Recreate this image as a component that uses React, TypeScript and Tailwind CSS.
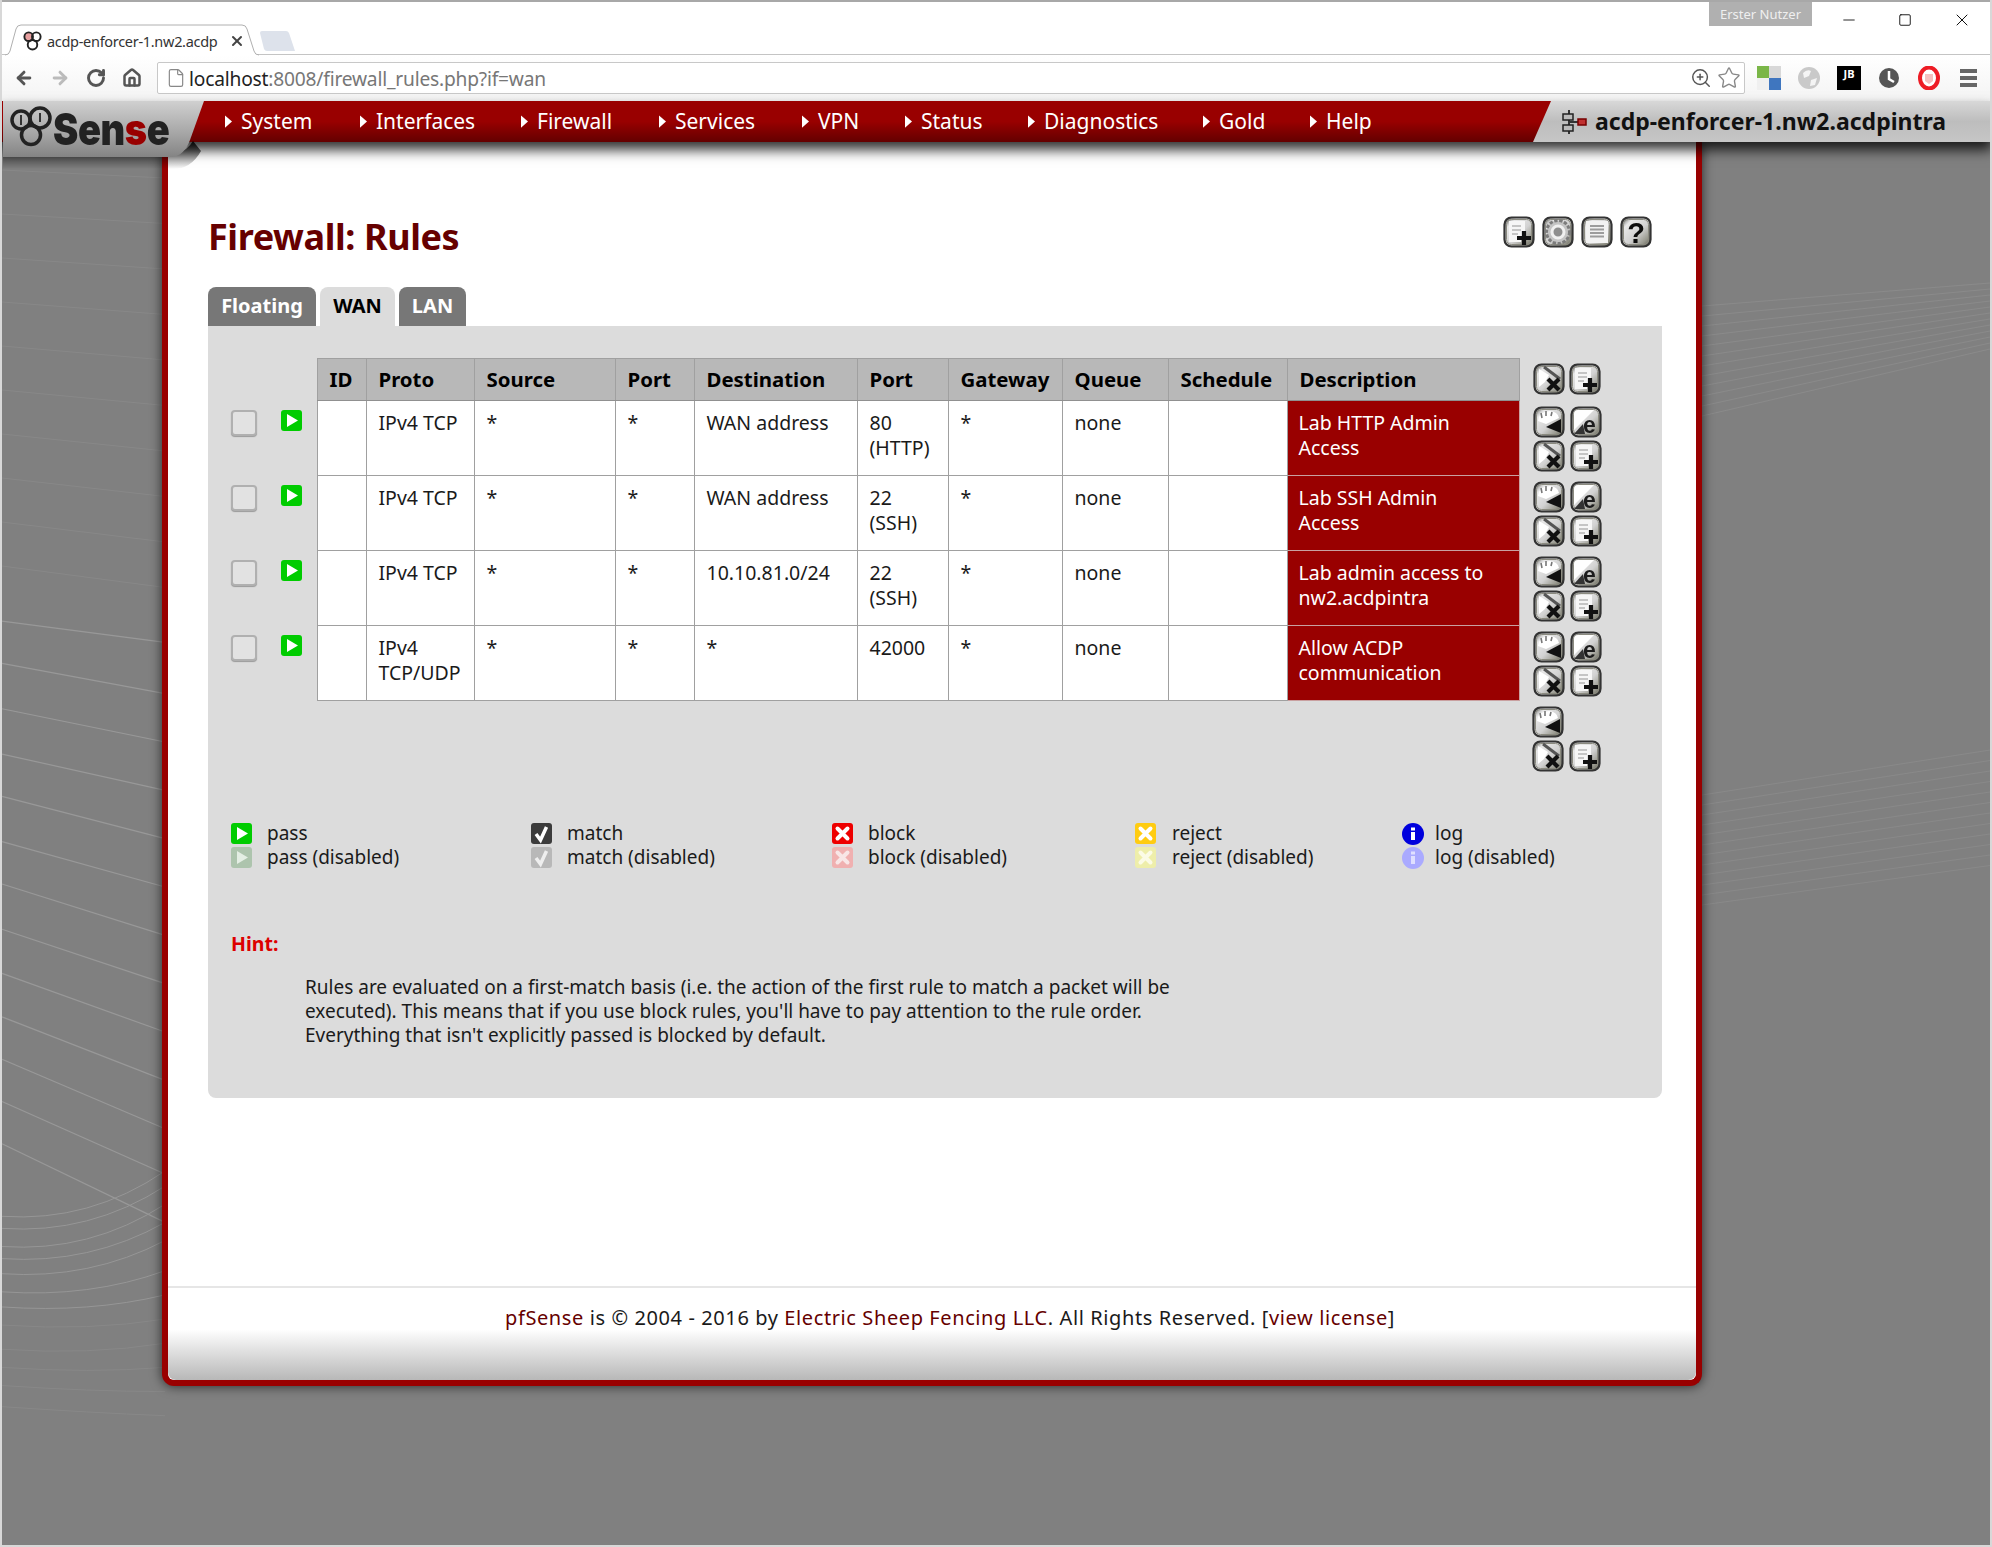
import { useId } from "react";
import { ArrowLeft, ArrowRight, RotateCw, House, File, ZoomIn, Star, Minus, Square, X } from "lucide-react";

type Glyph = "del" | "add" | "move" | "edit" | "gear" | "list" | "help";

const ToolIcon = ({ glyph, className = "w-[32px] h-[32px]" }: { glyph: Glyph; className?: string }) => {
    const id = useId();
    return (
        <svg viewBox="0 0 32 32" className={`blur-[0.5px] ${className}`}>
            <defs>
                <linearGradient id={id} x1="0" y1="0" x2="1" y2="1">
                    <stop offset="0" stopColor="#4c4c4c" />
                    <stop offset="0.22" stopColor="#e8e8e8" />
                    <stop offset="0.55" stopColor="#d2d2d2" />
                    <stop offset="0.8" stopColor="#9a9a90" />
                    <stop offset="1" stopColor="#55554a" />
                </linearGradient>
            </defs>
            <rect x="1.5" y="1.5" width="29" height="29" rx="7" fill={`url(#${id})`} stroke="#333" strokeWidth="2.2" />
            <rect x="3.5" y="3.5" width="25" height="25" rx="5" fill="none" stroke="#8b8b80" strokeWidth="1" />
            {glyph === "del" && (
                <g>
                    <path d="M6 6 L16 12 L12 19 L6 24 Z" fill="#fff" />
                    <path d="M11 4 L27 16" stroke="#555" strokeWidth="3" />
                    <path d="M15 16 L26 27 M26 16 L15 27" stroke="#111" strokeWidth="4.2" />
                </g>
            )}
            {glyph === "add" && (
                <g>
                    <path d="M6 5 H22 V20 H18 V26 H6 Z" fill="#f6f6f6" />
                    <path d="M9 10 H18 M9 14 H18 M9 18 H15" stroke="#b5b5b5" strokeWidth="1.5" />
                    <path d="M21 15 V29 M14 22 H28" stroke="#111" strokeWidth="4.2" />
                </g>
            )}
            {glyph === "move" && (
                <g>
                    <path d="M5 15 Q6 5 17 5 Q25 6 26 12 L13 18 Z" fill="#fff" />
                    <path d="M9 12 L8 7 M13 10 L13 5 M18 10 L19 6" stroke="#777" strokeWidth="1.6" />
                    <path d="M28 13 V27 L13 21 Z" fill="#111" />
                </g>
            )}
            {glyph === "edit" && (
                <g>
                    <path d="M4 24 L24 4 L8 4 Q4 4 4 8 Z" fill="#fff" />
                    <path d="M4 28 L13 18 L15 28 Z" fill="#333" />
                    <text x="13" y="27" fontSize="23" fontWeight="700" fill="#1c1c1c" fontFamily="'Liberation Sans',sans-serif">e</text>
                </g>
            )}
            {glyph === "gear" && (
                <g>
                    <circle cx="16" cy="16" r="11.5" fill="#c4c4c4" stroke="#7c7c7c" strokeWidth="3" strokeDasharray="3.4 1.6" />
                    <circle cx="16" cy="16" r="6" fill="#8e8e8e" stroke="#f0f0f0" strokeWidth="3" />
                </g>
            )}
            {glyph === "list" && (
                <g>
                    <rect x="5" y="5" width="22" height="22" fill="#f2f2f2" />
                    <path d="M9 10 H23 M9 13.5 H23 M9 17 H23 M9 20.5 H23" stroke="#9c9c9c" strokeWidth="2.2" />
                </g>
            )}
            {glyph === "help" && (
                <text x="16" y="27" textAnchor="middle" fontSize="29" fontWeight="700" fill="#0c0c0c" fontFamily="'Liberation Sans',sans-serif">?</text>
            )}
        </svg>
    );
};

const Pass = ({ faded = false }: { faded?: boolean }) => (
    <span className={`w-[21px] h-[21px] rounded-[3px] flex items-center justify-center shrink-0 ${faded ? "bg-[#adc4ad]" : "bg-[#00cc00]"}`}>
        <svg viewBox="0 0 21 21" className="w-[21px] h-[21px]"><path d="M6 4 L17 10.5 L6 17 Z" fill={faded ? "#e4eee4" : "#fff"} /></svg>
    </span>
);

const Match = ({ faded = false }: { faded?: boolean }) => (
    <span className={`w-[21px] h-[21px] rounded-[3px] flex items-center justify-center shrink-0 ${faded ? "bg-[#b8b8b8]" : "bg-[#3c3c3c]"}`}>
        <svg viewBox="0 0 21 21" className="w-[21px] h-[21px]"><path d="M5 11 L9.5 17 L15.5 4" fill="none" stroke={faded ? "#eee" : "#fff"} strokeWidth="3.5" /></svg>
    </span>
);

const Cross = ({ color, mark }: { color: string; mark: string }) => (
    <span className={`w-[21px] h-[21px] rounded-[3px] flex items-center justify-center shrink-0 ${color}`}>
        <svg viewBox="0 0 21 21" className="w-[21px] h-[21px]"><path d="M5.5 5.5 L15.5 15.5 M15.5 5.5 L5.5 15.5" stroke={mark} strokeWidth="4" strokeLinecap="round" /></svg>
    </span>
);

const Info = ({ faded = false }: { faded?: boolean }) => (
    <span className={`w-[22px] h-[22px] rounded-full flex items-center justify-center shrink-0 ${faded ? "bg-[#aaaaff]" : "bg-[#0000dd]"}`}>
        <svg viewBox="0 0 22 22" className="w-[22px] h-[22px]"><path d="M9 9 H13 V17 H9 Z M9 4.5 H13 V7.5 H9 Z" fill={faded ? "#dfdfff" : "#fff"} /></svg>
    </span>
);

const navItems = [
    { label: "System", w: "w-[135px]" },
    { label: "Interfaces", w: "w-[161px]" },
    { label: "Firewall", w: "w-[138px]" },
    { label: "Services", w: "w-[143px]" },
    { label: "VPN", w: "w-[103px]" },
    { label: "Status", w: "w-[123px]" },
    { label: "Diagnostics", w: "w-[175px]" },
    { label: "Gold", w: "w-[107px]" },
    { label: "Help", w: "w-[100px]" },
];

const rules = [
    { proto: "IPv4 TCP", dest: "WAN address", port: "80 (HTTP)", desc: "Lab HTTP Admin Access" },
    { proto: "IPv4 TCP", dest: "WAN address", port: "22 (SSH)", desc: "Lab SSH Admin Access" },
    { proto: "IPv4 TCP", dest: "10.10.81.0/24", port: "22 (SSH)", desc: "Lab admin access to nw2.acdpintra" },
    { proto: "IPv4 TCP/UDP", dest: "*", port: "42000", desc: "Allow ACDP communication" },
];

const headers = ["ID", "Proto", "Source", "Port", "Destination", "Port", "Gateway", "Queue", "Schedule", "Description"];

const legend = [
    { w: "w-[300px]", gap: "gap-[15px]", label: "pass", on: <Pass />, off: <Pass faded /> },
    { w: "w-[301px]", gap: "gap-[15px]", label: "match", on: <Match />, off: <Match faded /> },
    { w: "w-[303px]", gap: "gap-[15px]", label: "block", on: <Cross color="bg-[#ee0000]" mark="#fff" />, off: <Cross color="bg-[#f0b0b0]" mark="#f8e6e6" /> },
    { w: "w-[267px]", gap: "gap-[16px]", label: "reject", on: <Cross color="bg-[#ffcc11]" mark="#fff" />, off: <Cross color="bg-[#eeeeaa]" mark="#fbfbe6" /> },
    { w: "w-[220px]", gap: "gap-[11px]", label: "log", on: <Info />, off: <Info faded /> },
];

const leftStart = [35, 105, 180, 255, 325, 400, 470, 545, 618, 690, 760, 830, 900];
const leftEnd = [70, 155, 235, 315, 395, 475, 555, 635, 715, 795, 875, 950, 1030];
const fanStart = [1020, 1040, 1070, 1090, 1115, 1145, 1170, 1200, 1240, 1270, 1300, 1335];
const fanEnd = [945, 970, 1000, 1030, 1060, 1110, 1150, 1190, 1230, 1270, 1310, 1350];
const band = [0, 1, 2, 3, 4, 5, 6, 7, 8, 9, 10, 11];

const Backdrop = () => (
    <svg className="absolute inset-0 w-full h-full" viewBox="0 0 1992 1547">
        {leftStart.map((y, i) => (
            <path key={i} d={`M2 ${600 + y / 1.655} L165 ${600 + leftEnd[i] / 1.655}`} stroke="#989898" strokeWidth="1.2" fill="none" />
        ))}
        {band.slice(0, 10).map(i => (
            <path key={i} d={`M2 ${170 + i * 44} L165 ${178 + i * 44 + i * 1.5}`} stroke="#888888" strokeWidth="1" fill="none" />
        ))}
        {fanStart.map((y, i) => (
            <path key={i} d={`M2 ${600 + y / 1.655} Q90 ${600 + (y + 10) / 1.655} 165 ${600 + fanEnd[i] / 1.655}`} stroke={i < 7 ? "#969696" : "#888888"} strokeWidth="1" fill="none" />
        ))}
        {band.map(i => (
            <path key={i} d={`M1702 ${306 + i * 10} L1990 ${283 + i * 6}`} stroke="#8a8a8a" strokeWidth="1" fill="none" />
        ))}
        {band.map(i => (
            <path key={i} d={`M1702 ${795 + i * 10} L1990 ${750 + i * 10.5}`} stroke="#898989" strokeWidth="1" fill="none" />
        ))}
    </svg>
);

const Logo = () => (
    <div className="absolute left-[3px] top-0 w-[215px] h-[68px]">
        <svg viewBox="0 0 215 68" className="absolute inset-0 w-full h-full">
            <defs>
                <linearGradient id="logoBg" x1="0" y1="0" x2="0" y2="1">
                    <stop offset="0" stopColor="#d0d0d0" />
                    <stop offset="0.55" stopColor="#a8a8a8" />
                    <stop offset="1" stopColor="#848484" />
                </linearGradient>
                <linearGradient id="logoShade" x1="0" y1="0" x2="0" y2="1">
                    <stop offset="0" stopColor="#000" stopOpacity="0.9" />
                    <stop offset="1" stopColor="#000" stopOpacity="0" />
                </linearGradient>
            </defs>
            <path d="M0 50 H176 Q184 50 190 40 L198 50 Q188 68 170 68 H0 Z" fill="url(#logoShade)" />
            <path d="M0 0 H201 L187 39 Q181 55 169 56 H0 Z" fill="url(#logoBg)" />
            <g fill="none" stroke="#222" strokeWidth="3.5" className="blur-[0.5px]">
                <circle cx="18" cy="19" r="9" />
                <circle cx="37" cy="17" r="10" />
                <circle cx="28" cy="34" r="9.5" />
            </g>
            <path d="M18 14 V24 M37 12 V21" stroke="#333" strokeWidth="2" />
        </svg>
        <span className="absolute left-[50px] top-[2px] text-[38px] leading-[52px] font-black tracking-[-0.4px] text-[#222] font-['Inter',sans-serif] scale-y-[1.15] blur-[0.5px]">
            Sen<span className="text-[#990000]">s</span>e
        </span>
    </div>
);

export default function App() {
    return (
        <div className="relative w-[1992px] h-[1547px] overflow-hidden bg-[#808080] text-[#1a1a1a] text-[19.5px] leading-[25px] font-['Noto_Sans',sans-serif]">
            <Backdrop />

            {/* browser chrome */}
            <div className="relative bg-white border-t-2 border-[#a8a8a8]">
                <div className="relative h-[53px] border-b border-[#c4c4c4]">
                    <svg className="absolute left-[4px] top-[22px] w-[300px] h-[32px]" viewBox="0 0 300 32">
                        <path d="M256 9 Q256 7 258 7 H282 Q284 7 285 9 L291 27 H263 Q261 27 260 25 Z" fill="#dde2eb" />
                        <path d="M1 31 Q5 31 6 27 L12 5 Q13 1 17 1 H238 Q242 1 243 5 L250 27 Q251 31 255 31" fill="#fff" stroke="#b0b0b0" />
                    </svg>
                    <div className="absolute left-[22px] top-[28px] flex items-center gap-[4px]">
                        <svg viewBox="0 0 22 22" className="w-[21px] h-[21px]">
                            <g fill="none" stroke="#222" strokeWidth="2">
                                <circle cx="7" cy="7" r="4.5" fill="#e8a0a0" />
                                <circle cx="15" cy="7" r="4.5" />
                                <circle cx="11" cy="15.5" r="5" />
                            </g>
                        </svg>
                        <span className="whitespace-nowrap text-[14.5px] leading-[20px] text-[#333] tracking-[-0.3px]">acdp-enforcer-1.nw2.acdp</span>
                        <X className="w-[16px] h-[16px] ml-[8px] text-[#444]" strokeWidth={3} />
                    </div>
                    <div className="absolute right-[180px] top-[0px] w-[103px] h-[24px] bg-[#b0b0b0] text-[#efefef] text-[13px] leading-[24px] text-center">Erster Nutzer</div>
                    <div className="absolute right-0 top-[8px] flex items-center">
                        <Minus className="w-[18px] h-[18px] mr-[40px] text-[#111]" strokeWidth={1.2} />
                        <Square className="w-[14px] h-[14px] mr-[40px] text-[#111]" strokeWidth={1.6} />
                        <X className="w-[20px] h-[20px] mr-[20px] text-[#111]" strokeWidth={1.2} />
                    </div>
                </div>
                <div className="h-[46px] flex items-center bg-gradient-to-b from-white to-[#f4f4f4]">
                    <div className="flex items-center w-[157px] pl-[14px] gap-[16px]">
                        <ArrowLeft className="w-[20px] h-[20px] text-[#555]" strokeWidth={3.5} />
                        <ArrowRight className="w-[20px] h-[20px] text-[#bbb]" strokeWidth={3.5} />
                        <RotateCw className="w-[20px] h-[20px] text-[#555]" strokeWidth={3.5} />
                        <House className="w-[20px] h-[20px] text-[#555]" strokeWidth={3} />
                    </div>
                    <div className="flex-none w-[1588px] h-[32px] bg-white border border-[#c8c8c8] rounded-[2px] flex items-center pl-[8px] pr-[3px]">
                        <File className="w-[20px] h-[20px] text-[#888]" strokeWidth={1.4} />
                        <span className="ml-[3px] text-[19.2px] text-[#777] whitespace-nowrap tracking-[-0.2px]"><span className="text-[#222]">localhost</span>:8008/firewall_rules.php?if=wan</span>
                        <ZoomIn className="ml-auto w-[22px] h-[22px] text-[#555]" strokeWidth={1.6} />
                        <Star className="ml-[5px] w-[24px] h-[24px] text-[#888]" strokeWidth={1.4} />
                    </div>
                    <div className="flex items-center pl-[12px] gap-[16px]">
                        <div className="grid grid-cols-2 w-[24px] h-[24px]">
                            <span className="bg-[#7ab648]" /><span className="bg-[#d8d8d8]" /><span className="bg-[#f0f0f0]" /><span className="bg-[#3f76bf]" />
                        </div>
                        <svg viewBox="0 0 24 24" className="w-[24px] h-[24px]">
                            <circle cx="12" cy="12" r="11" fill="#c9c9c9" />
                            <path d="M6 7 Q10 3 14 5 L12 10 L7 12 Z M14 14 L20 12 L18 19 L13 20 Z" fill="#f4f4f4" />
                        </svg>
                        <span className="w-[24px] h-[24px] bg-black text-white text-[11px] leading-[16px] font-bold text-center">JB</span>
                        <svg viewBox="0 0 24 24" className="w-[24px] h-[24px]">
                            <circle cx="12" cy="12" r="10" fill="#555" />
                            <path d="M12 5 V13 L17 16" stroke="#fff" strokeWidth="2.5" fill="none" />
                        </svg>
                        <svg viewBox="0 0 24 24" className="w-[24px] h-[24px]">
                            <ellipse cx="12" cy="12" rx="9" ry="10.5" fill="#fff" stroke="#ee1c25" strokeWidth="4" />
                            <path d="M8 8 H16 V15 L12 18 L8 15 Z" fill="#f5c0c0" />
                        </svg>
                        <div className="flex flex-col gap-[3px] w-[17px] ml-[3px]">
                            <span className="h-[4px] bg-[#666]" /><span className="h-[4px] bg-[#666]" /><span className="h-[4px] bg-[#666]" />
                        </div>
                    </div>
                </div>
            </div>

            {/* pfSense header bar */}
            <div className="relative z-20 h-[41px] flex bg-gradient-to-b from-[#990000] via-[#990000] to-[#640000] shadow-[0_8px_12px_rgba(0,0,0,0.8)]">
                <div className="flex pl-[225px] w-[1533px] items-center text-white text-[21px]">
                    {navItems.map(item => (
                        <div key={item.label} className={`flex items-center shrink-0 ${item.w}`}>
                            <svg viewBox="0 0 8 14" className="w-[7px] h-[13px] mr-[9px]"><path d="M0 0 L8 7 L0 14 Z" fill="#fff" /></svg>
                            <span>{item.label}</span>
                        </div>
                    ))}
                </div>
                <div className="flex-1 flex items-center pl-[27px] bg-gradient-to-b from-[#d8d8d8] via-[#bdbdbd] to-[#c6c6c6] [clip-path:polygon(18px_0,100%_0,100%_100%,0_100%)]">
                    <svg viewBox="0 0 28 28" className="w-[28px] h-[28px]">
                        <path d="M9 2 V26 M9 14 H22" stroke="#333" strokeWidth="2" />
                        <rect x="3" y="6" width="10" height="6" fill="#bbb" stroke="#222" strokeWidth="1.5" />
                        <rect x="3" y="17" width="10" height="6" fill="#bbb" stroke="#222" strokeWidth="1.5" />
                        <rect x="18" y="11" width="8" height="6" fill="#c03030" stroke="#700" strokeWidth="1.5" />
                    </svg>
                    <span className="ml-[7px] text-[23px] font-bold text-[#111] whitespace-nowrap">acdp-enforcer-1.nw2.acdpintra</span>
                </div>
                <Logo />
            </div>

            {/* main card */}
            <div className="relative z-10 ml-[162px] w-[1540px] h-[1244px] flex flex-col bg-white border-x-[6px] border-b-[6px] border-[#990000] rounded-b-[12px] shadow-[0_0_12px_rgba(0,0,0,0.7)]">
                <div className="flex justify-between pl-[40px] pr-[44px] pt-[75px]">
                    <h1 className="text-[36px] leading-[40px] font-bold text-[#660000] tracking-[-0.4px]">Firewall: Rules</h1>
                    <div className="flex gap-[7px] items-center -mt-[11px]">
                        <ToolIcon glyph="add" />
                        <ToolIcon glyph="gear" />
                        <ToolIcon glyph="list" />
                        <ToolIcon glyph="help" />
                    </div>
                </div>

                <div className="flex ml-[40px] mt-[30px] h-[39px] font-bold text-[20px] gap-[4px]">
                    <div className="w-[108px] rounded-t-[8px] bg-[#777777] text-white text-center leading-[38px]">Floating</div>
                    <div className="w-[75px] rounded-t-[8px] bg-[#dcdcdc] text-black text-center leading-[38px]">WAN</div>
                    <div className="w-[67px] rounded-t-[8px] bg-[#777777] text-white text-center leading-[38px]">LAN</div>
                </div>

                <div className="ml-[40px] w-[1454px] h-[772px] bg-[#dcdcdc] rounded-b-[8px] pt-[32px]">
                    <table className="table-fixed border-collapse w-[1454px]">
                        <colgroup>
                            <col className="w-[60px]" /><col className="w-[49px]" /><col className="w-[49px]" /><col className="w-[108px]" />
                            <col className="w-[141px]" /><col className="w-[79px]" /><col className="w-[163px]" /><col className="w-[91px]" />
                            <col className="w-[114px]" /><col className="w-[106px]" /><col className="w-[119px]" /><col className="w-[232px]" />
                            <col className="w-[143px]" />
                        </colgroup>
                        <thead>
                            <tr className="h-[42px]">
                                <th /><th />
                                {headers.map((h, i) => (
                                    <th key={i} className="bg-[#b8b8b8] border border-[#a0a0a0] border-b-[#909090] text-left text-[20.4px] font-bold px-[12px] text-black whitespace-nowrap">{h}</th>
                                ))}
                                <th className="align-top pt-[4px] pl-[13px]">
                                    <div className="flex gap-[4px]"><ToolIcon glyph="del" /><ToolIcon glyph="add" /></div>
                                </th>
                            </tr>
                        </thead>
                        <tbody>
                            {rules.map((r, i) => (
                                <tr key={i} className="h-[75px]">
                                    <td className="align-top pt-[9px] pl-[23px]">
                                        <span className="block w-[26px] h-[26px] rounded-[4px] bg-[#e2e2e2] border-2 border-[#b0b0b0] shadow-[0_1px_1px_#999]" />
                                    </td>
                                    <td className="align-top pt-[9px] pl-[13px]"><Pass /></td>
                                    <td className="bg-white border border-[#a0a0a0]" />
                                    <td className="bg-white border border-[#a0a0a0] align-top px-[12px] pt-[9px]">{r.proto}</td>
                                    <td className="bg-white border border-[#a0a0a0] align-top px-[12px] pt-[9px]">*</td>
                                    <td className="bg-white border border-[#a0a0a0] align-top px-[12px] pt-[9px]">*</td>
                                    <td className="bg-white border border-[#a0a0a0] align-top px-[12px] pt-[9px] whitespace-nowrap">{r.dest}</td>
                                    <td className="bg-white border border-[#a0a0a0] align-top px-[12px] pt-[9px]">{r.port}</td>
                                    <td className="bg-white border border-[#a0a0a0] align-top px-[12px] pt-[9px]">*</td>
                                    <td className="bg-white border border-[#a0a0a0] align-top px-[12px] pt-[9px]">none</td>
                                    <td className="bg-white border border-[#a0a0a0]" />
                                    <td className="bg-[#990000] border border-[#c9a0a0] align-top pl-[11px] pr-[30px] pt-[9px] text-white">{r.desc}</td>
                                    <td className="align-top pt-[5px] pl-[13px]">
                                        <div className="grid grid-cols-[32px_32px] gap-x-[5px] gap-y-[2px]">
                                            <ToolIcon glyph="move" /><ToolIcon glyph="edit" />
                                            <ToolIcon glyph="del" /><ToolIcon glyph="add" />
                                        </div>
                                    </td>
                                </tr>
                            ))}
                            <tr>
                                <td colSpan={12} />
                                <td className="pt-[5px] pl-[13px] align-top">
                                    <div className="grid grid-cols-[32px_32px] gap-x-[5px] gap-y-[2px]">
                                        <ToolIcon glyph="move" /><span />
                                        <ToolIcon glyph="del" /><ToolIcon glyph="add" />
                                    </div>
                                </td>
                            </tr>
                        </tbody>
                    </table>

                    <div className="flex pl-[23px] mt-[51px] text-[19px]">
                        {legend.map(l => (
                            <div key={l.label} className={`flex flex-col shrink-0 gap-[2px] ${l.w}`}>
                                <div className={`flex items-center h-[22px] ${l.gap}`}>{l.on}<span>{l.label}</span></div>
                                <div className={`flex items-center h-[22px] ${l.gap}`}>{l.off}<span>{l.label} (disabled)</span></div>
                            </div>
                        ))}
                    </div>

                    <div className="pl-[23px] mt-[62px] font-bold text-[#dd0000]">Hint:</div>
                    <p className="ml-[97px] mt-[19px] w-[900px] text-[19px] leading-[24px]">
                        Rules are evaluated on a first-match basis (i.e. the action of the first rule to match a packet will be executed). This means that if you use block rules, you'll have to pay attention to the rule order. Everything that isn't explicitly passed is blocked by default.
                    </p>
                </div>

                <div className="mt-auto h-[94px] border-t-2 border-[#e6e6e6] rounded-b-[8px] pt-[17px] pl-[36px] text-center text-[20px] tracking-[0.6px] bg-gradient-to-b from-white from-45% to-[#b8b8b8]">
                    <a className="text-[#660000]">pfSense</a> is © 2004 - 2016 by <a className="text-[#660000]">Electric Sheep Fencing LLC</a>. All Rights Reserved. [<a className="text-[#660000]">view license</a>]
                </div>
            </div>

            <div className="absolute left-0 top-0 bottom-0 w-[2px] bg-[#d8d8d8] z-30" />
            <div className="absolute right-0 top-0 bottom-0 w-[2px] bg-[#d8d8d8] z-30" />
            <div className="absolute left-0 right-0 bottom-0 h-[2px] bg-[#d8d8d8] z-30" />
        </div>
    );
}
